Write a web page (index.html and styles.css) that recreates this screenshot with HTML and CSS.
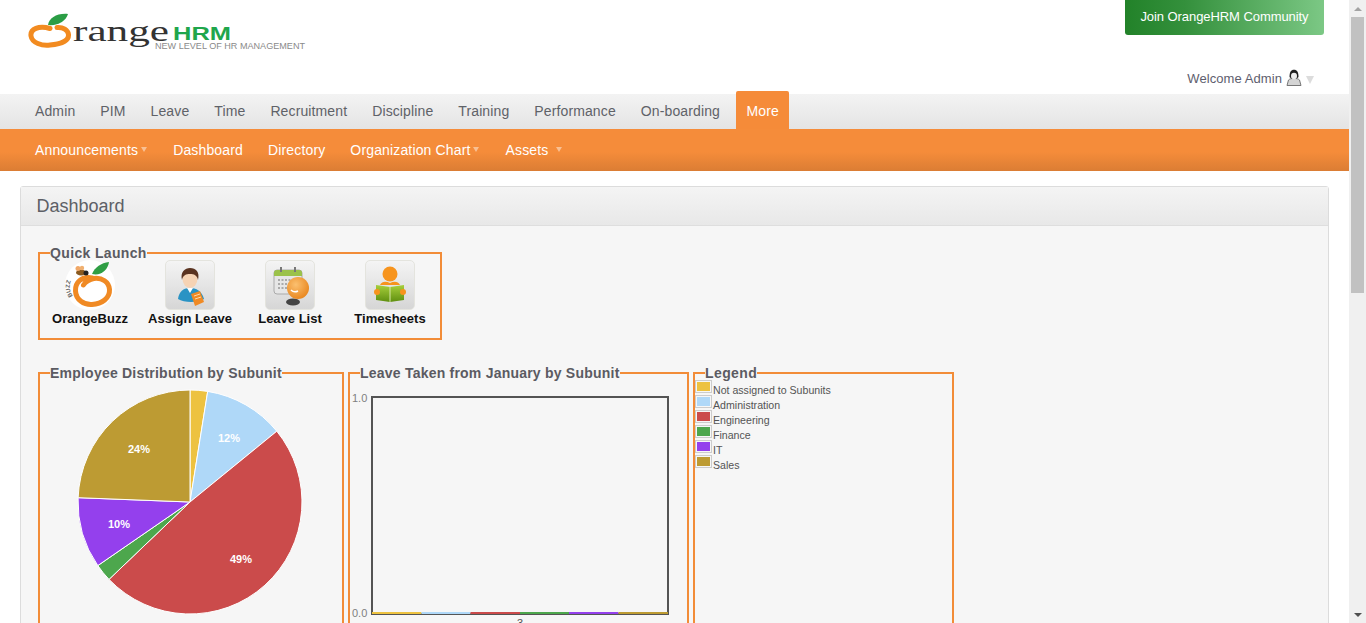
FILE: index.html
```html
<!DOCTYPE html>
<html>
<head>
    <title>OrangeHRM Dashboard</title>
    <link rel="stylesheet" href="styles.css">
</head>
<body>
<div class="page">
    <div class="main">
        <div class="top">
            <svg class="logo" width="280" height="44" viewBox="28 12 280 44">
                <path class="logo-ring" d="M50 28.500C39 25 30 29 31 36C32 43 42 46 50 45C60 44 69 41 68.500 34.500C68 30 63 27 57 27.500"/>
                <path class="logo-leaf" d="M48 25C49 18 57 13 68 14C66 21 58 26 48 25Z"/>
                <text class="logo-word" x="73" y="41" textLength="96" lengthAdjust="spacingAndGlyphs">range</text>
                <text class="logo-hrm" x="173" y="40" textLength="58" lengthAdjust="spacingAndGlyphs">HRM</text>
                <text class="logo-tag" x="155" y="49" textLength="150" lengthAdjust="spacingAndGlyphs">NEW LEVEL OF HR MANAGEMENT</text>
            </svg>
            <div class="top-right">
                <a class="join-btn">Join OrangeHRM Community</a>
                <div class="welcome">
                    <span>Welcome Admin</span>
                    <svg class="user-icon" width="16" height="18" viewBox="0 0 16 18">
                        <path d="M1 16.500L2.500 11C4 9.500 5.500 9.500 8 9.500C10.500 9.500 12 9.500 13.500 11L15 16.500Z" fill="#d4d4d4" stroke="#777"/>
                        <path d="M3.500 8C3.500 3 5 .8 8 .8C11 .8 12.500 3 12.500 8C11 10.500 5 10.500 3.500 8Z" fill="#222"/>
                        <ellipse cx="8" cy="7" rx="3" ry="3.200" fill="#eee"/>
                    </svg>
                    <span class="welcome-arrow"></span>
                </div>
            </div>
        </div>

        <div class="menu">
            <a>Admin</a>
            <a>PIM</a>
            <a>Leave</a>
            <a>Time</a>
            <a>Recruitment</a>
            <a>Discipline</a>
            <a>Training</a>
            <a>Performance</a>
            <a>On-boarding</a>
            <a class="active">More</a>
        </div>
        <div class="submenu">
            <a>Announcements<span class="caret"></span></a>
            <a>Dashboard</a>
            <a>Directory</a>
            <a>Organization Chart<span class="caret"></span></a>
            <a>Assets<span class="caret caret-wide"></span></a>
        </div>

        <div class="panel">
            <div class="panel-head">Dashboard</div>
            <div class="panel-body">
                <fieldset class="quick-launch">
                    <legend>Quick Launch</legend>
                    <div class="launch-row">
                        <div class="launch-item">
                            <svg width="50" height="50" viewBox="0 0 50 50">
                                <circle cx="25" cy="25" r="25" fill="#fff"/>
                                <path d="M27 18C17 16 10 22 10.500 31C11 40 19 45 27 44.500C37 44 45 38 44.500 29.500C44 22 37 17.500 29 18.500C25 19 20 22 18.500 25" fill="none" stroke="#f08a24" stroke-width="5" stroke-linecap="round"/>
                                <path d="M27 14C30 7 36 3 44 2C43 10 36 16 27 14Z" fill="#2f9e44"/>
                                <path id="buzz-arc" d="M8 36C3 29 4 22 9 16" fill="none"/>
                                <text class="buzz-text"><textPath href="#buzz-arc">BUZZ</textPath></text>
                                <ellipse cx="16" cy="12.500" rx="5" ry="3" fill="#8a5a20"/>
                                <circle cx="21" cy="13" r="2.500" fill="#222"/>
                                <circle cx="13" cy="8.500" r="2.500" fill="#f0a868"/>
                                <circle cx="17" cy="8" r="2.200" fill="#f0b070"/>
                            </svg>
                            <span>OrangeBuzz</span>
                        </div>
                        <div class="launch-item">
                            <div class="tile">
                                <svg width="48" height="48" viewBox="0 0 48 48">
                                    <path d="M12 38C13 30 18 27 24 27C30 27 36 30 38 38C32 42 18 42 12 38Z" fill="#2a93c4"/>
                                    <path d="M21 27L24 32L27 27Z" fill="#fff"/>
                                    <ellipse cx="24" cy="18" rx="7.500" ry="9" fill="#f6d3b4"/>
                                    <path d="M16 19C14 11 19 7 24 7C30 7 34 11 32 19C31 14 28 13 24 13C20 13 17 14 16 19Z" fill="#5a3320"/>
                                    <path d="M25 33L34 30L38 41L29 45Z" fill="#f08a24"/>
                                    <path d="M28 35L34 33M29 38L35 36" stroke="#ffd9a8" stroke-width="1"/>
                                </svg>
                            </div>
                            <span>Assign Leave</span>
                        </div>
                        <div class="launch-item">
                            <div class="tile">
                                <svg width="48" height="48" viewBox="0 0 48 48">
                                    <rect x="8" y="9" width="28" height="24" rx="3" fill="#e6e6e6" stroke="#aaa"/>
                                    <path d="M8 15V12C8 10 9 9 11 9H33C35 9 36 10 36 12V15Z" fill="#9bc24a"/>
                                    <rect x="14" y="6" width="2" height="5" fill="#777"/>
                                    <rect x="28" y="6" width="2" height="5" fill="#777"/>
                                    <path d="M12 19H32M12 23H28M12 27H26" stroke="#aaa" stroke-width="2" stroke-dasharray="2 1.500"/>
                                    <ellipse cx="27" cy="41" rx="7" ry="3.500" fill="#444"/>
                                    <circle cx="32" cy="27" r="11" fill="url(#ball)"/>
                                    <path d="M25 29C27 31 30 31 32 30" stroke="#fff" stroke-width="1.500" fill="none"/>
                                </svg>
                            </div>
                            <span>Leave List</span>
                        </div>
                        <div class="launch-item">
                            <div class="tile">
                                <svg width="48" height="48" viewBox="0 0 48 48">
                                    <circle cx="24" cy="13" r="7.500" fill="#f7941d"/>
                                    <path d="M14 24C16 20 20 20 24 22C28 20 32 20 34 24Z" fill="#f7941d"/>
                                    <path d="M10 24L24 26L38 24V39L24 41L10 39Z" fill="url(#book)"/>
                                    <path d="M24 26V41" stroke="#d7e7a8" stroke-width="1"/>
                                    <circle cx="11" cy="31" r="3" fill="#f7941d"/>
                                    <circle cx="37" cy="31" r="3" fill="#f7941d"/>
                                </svg>
                            </div>
                            <span>Timesheets</span>
                        </div>
                    </div>
                </fieldset>

                <div class="charts">
                    <fieldset class="chart chart-pie">
                        <legend>Employee Distribution by Subunit</legend>
                        <svg class="pie" width="226" height="226" viewBox="-1 -1 226 226">
                            <g stroke="#fff" stroke-width="1">
                                <path d="M112 112L112 0A112 112 0 0 1 129.700 1.400Z" fill="#edc240"/>
                                <path d="M112 112L129.700 1.400A112 112 0 0 1 198.800 41.200Z" fill="#afd8f8"/>
                                <path d="M112 112L198.800 41.200A112 112 0 0 1 186.900 195.200A112 112 0 0 1 31 189.400Z" fill="#cb4b4b"/>
                                <path d="M112 112L31 189.400A112 112 0 0 1 19.800 175.600Z" fill="#4da74d"/>
                                <path d="M112 112L19.800 175.600A112 112 0 0 1 .1 107.700Z" fill="#9440ed"/>
                                <path d="M112 112L.1 107.700A112 112 0 0 1 112 0Z" fill="#bd9b33"/>
                            </g>
                            <text class="pie-label" x="50" y="63">24%</text>
                            <text class="pie-label" x="140" y="52">12%</text>
                            <text class="pie-label" x="30" y="138">10%</text>
                            <text class="pie-label" x="152" y="173">49%</text>
                        </svg>
                    </fieldset>

                    <fieldset class="chart chart-bar">
                        <legend>Leave Taken from January by Subunit</legend>
                        <svg class="bars" width="337" height="250" viewBox="0 0 337 250">
                            <rect x="22" y="16" width="296" height="217" fill="none" stroke="#545454" stroke-width="2"/>
                            <rect x="22" y="231" width="49.500" height="2" fill="#edc240"/>
                            <rect x="71.500" y="231" width="49" height="2" fill="#afd8f8"/>
                            <rect x="120.500" y="231" width="49.500" height="2" fill="#cb4b4b"/>
                            <rect x="170" y="231" width="49" height="2" fill="#4da74d"/>
                            <rect x="219" y="231" width="49.500" height="2" fill="#9440ed"/>
                            <rect x="268.500" y="231" width="49.500" height="2" fill="#bd9b33"/>
                            <text class="axis" x="2" y="21">1.0</text>
                            <text class="axis" x="2" y="236">0.0</text>
                            <text class="axis axis-x" x="167" y="246">3</text>
                        </svg>
                    </fieldset>

                    <fieldset class="chart chart-legend">
                        <legend>Legend</legend>
                        <div class="legend-list">
                            <div class="legend-row"><span class="swatch"><i class="c-none"></i></span><span class="legend-text">Not assigned to Subunits</span></div>
                            <div class="legend-row"><span class="swatch"><i class="c-admin"></i></span><span class="legend-text">Administration</span></div>
                            <div class="legend-row"><span class="swatch"><i class="c-eng"></i></span><span class="legend-text">Engineering</span></div>
                            <div class="legend-row"><span class="swatch"><i class="c-fin"></i></span><span class="legend-text">Finance</span></div>
                            <div class="legend-row"><span class="swatch"><i class="c-it"></i></span><span class="legend-text">IT</span></div>
                            <div class="legend-row"><span class="swatch"><i class="c-sales"></i></span><span class="legend-text">Sales</span></div>
                        </div>
                    </fieldset>
                </div>
            </div>
        </div>
    </div>

    <div class="scrollbar">
        <div class="scroll-btn"><span class="arrow-up"></span></div>
        <div class="scroll-thumb"></div>
        <div class="scroll-space"></div>
        <div class="scroll-btn"><span class="arrow-down"></span></div>
    </div>
</div>

<svg class="defs" width="0" height="0">
    <defs>
        <radialGradient id="ball" cx="0.4" cy="0.35" r="0.7">
            <stop offset="0" stop-color="#fbc070"/>
            <stop offset="1" stop-color="#e8851c"/>
        </radialGradient>
        <linearGradient id="book" x1="0" y1="0" x2="0" y2="1">
            <stop offset="0" stop-color="#a8cf3c"/>
            <stop offset="1" stop-color="#5f8f10"/>
        </linearGradient>
    </defs>
</svg>
</body>
</html>
```

FILE: styles.css
```css
html, body {
    margin: 0;
    height: 623px;
    overflow: hidden;
    background: #fff;
}
body {
    font-family: "Liberation Sans", Arial, sans-serif;
    font-size: 14px;
    color: #5d5d5d;
}
.defs {
    position: absolute;
}
.page {
    display: flex;
    height: 623px;
    overflow: hidden;
}
.main {
    flex: 1;
    min-width: 0;
}

/* header */
.top {
    display: flex;
    justify-content: space-between;
    height: 94px;
    padding-right: 25px;
}
.logo {
    margin: 12px 0 0 28px;
}
.logo-ring {
    fill: none;
    stroke: #f28b20;
    stroke-width: 5;
    stroke-linecap: round;
}
.logo-leaf {
    fill: #2a9d45;
}
.logo-word {
    font-family: "Liberation Serif", serif;
    font-size: 29px;
    fill: #333;
}
.logo-hrm {
    font-family: "Liberation Sans", sans-serif;
    font-size: 18px;
    font-weight: bold;
    fill: #1fa64c;
}
.logo-tag {
    font-family: "Liberation Sans", sans-serif;
    font-size: 9px;
    fill: #8a8a8a;
}
.top-right {
    display: flex;
    flex-direction: column;
    align-items: flex-end;
}
.join-btn {
    display: block;
    width: 199px;
    height: 35px;
    line-height: 33px;
    text-align: center;
    color: #fff;
    font-size: 13px;
    letter-spacing: -0.070px;
    border-radius: 0 0 3px 3px;
    background: linear-gradient(to right, #228229 0%, #34903c 30%, #7cc885 100%);
}
.welcome {
    display: flex;
    align-items: center;
    margin: 34px 10px 0 0;
    font-size: 13px;
    letter-spacing: 0.080px;
    color: #5e5e6e;
}
.user-icon {
    margin-left: 4px;
}
.welcome-arrow {
    margin: 3px 0 0 4px;
    border-left: 4px solid transparent;
    border-right: 4px solid transparent;
    border-top: 8px solid #dcdcdc;
}

/* menus */
.menu {
    display: flex;
    align-items: flex-end;
    height: 35px;
    padding-left: 22.500px;
    letter-spacing: 0.120px;
    background: linear-gradient(#f3f3f3, #e4e4e4);
}
.menu a {
    display: block;
    padding: 0 12.500px;
    line-height: 35px;
    color: #5f6268;
}
.menu a.active {
    height: 38px;
    margin-left: 4px;
    padding: 0 10px;
    line-height: 41px;
    background: #f58b39;
    color: #fff;
    border-radius: 2px 2px 0 0;
}
.submenu {
    display: flex;
    height: 42px;
    padding-left: 22.500px;
    letter-spacing: 0.150px;
    background: linear-gradient(#f58c3a 0%, #f58c3a 55%, #db7d34 100%);
}
.submenu a {
    display: flex;
    align-items: center;
    padding: 0 12.500px;
    color: #fff;
}
.caret {
    width: 0;
    margin: -1px 1.500px 0 2.500px;
    border-left: 3.500px solid transparent;
    border-right: 3.500px solid transparent;
    border-top: 5px solid rgba(255, 255, 255, 0.45);
}
.caret-wide {
    margin-left: 8px;
    margin-right: 0;
}

/* dashboard panel */
.panel {
    margin: 15px 20px 0;
    height: 600px;
    border: 1px solid #dcdcdc;
    border-radius: 3px;
    background: #f6f6f6;
}
.panel-head {
    height: 38px;
    line-height: 38px;
    padding-left: 15.500px;
    font-size: 18px;
    color: #5d6066;
    border-bottom: 1px solid #dedede;
    background: linear-gradient(#f4f4f4, #e8e8e8);
}
.panel-body {
    padding: 19px 0 0 17px;
}
fieldset {
    margin: 0;
    padding: 0;
    border: 2px solid #f28c38;
    min-width: 0;
}
legend {
    margin-left: 10px;
    padding: 0;
    font-size: 14px;
    font-weight: bold;
    letter-spacing: 0.220px;
    color: #5b5b62;
}
.quick-launch legend {
    letter-spacing: 0.350px;
}
.chart-legend legend {
    letter-spacing: 0.400px;
}

.quick-launch {
    width: 400px;
    padding-bottom: 12px;
}
.launch-row {
    display: flex;
    margin-top: -1px;
}
.launch-item {
    width: 100px;
    display: flex;
    flex-direction: column;
    align-items: center;
}
.launch-item span {
    margin-top: 1px;
    font-size: 13px;
    line-height: 15px;
    font-weight: bold;
    color: #111;
}
.launch-item svg {
    display: block;
}
.tile {
    width: 48px;
    height: 48px;
    border: 1px solid #e4e4de;
    border-radius: 5px;
    background: linear-gradient(#f4f4f4, #d6d6d6);
}
.buzz-text {
    font-size: 6px;
    font-weight: bold;
    fill: #666;
}

.charts {
    display: flex;
    gap: 4px;
    margin-top: 25px;
}
.chart {
    height: 300px;
}
.chart-pie {
    width: 302px;
}
.chart-bar {
    width: 337px;
}
.chart-legend {
    width: 257px;
}
.pie {
    display: block;
    overflow: visible;
    margin: 8px 0 0 37px;
}
.pie-label {
    font-size: 11px;
    font-weight: bold;
    fill: #fff;
}
.bars {
    display: block;
    overflow: visible;
}
.axis {
    font-size: 11px;
    fill: #7f7f7f;
}
.axis-x {
    fill: #545454;
}

.legend-list {
    margin-top: -1px;
}
.legend-row {
    display: flex;
    align-items: flex-start;
    gap: 1px;
    height: 15px;
    font-size: 10.600px;
    color: #545454;
}
.legend-text {
    line-height: 15px;
    margin-top: 3px;
}
.swatch {
    display: block;
    padding: 1px;
    border: 1px solid #ccc;
}
.swatch i {
    display: block;
    width: 13px;
    height: 9px;
}
.c-none { background: #edc240; }
.c-admin { background: #afd8f8; }
.c-eng { background: #cb4b4b; }
.c-fin { background: #4da74d; }
.c-it { background: #9440ed; }
.c-sales { background: #bd9b33; }

/* scrollbar */
.scrollbar {
    width: 17px;
    height: 623px;
    display: flex;
    flex-direction: column;
    background: #f0f0f0;
}
.scroll-btn {
    height: 17px;
    display: flex;
    align-items: center;
    justify-content: center;
}
.arrow-up {
    border-left: 4px solid transparent;
    border-right: 4px solid transparent;
    border-bottom: 4px solid #a3a3a3;
}
.arrow-down {
    border-left: 4px solid transparent;
    border-right: 4px solid transparent;
    border-top: 4px solid #505050;
}
.scroll-thumb {
    height: 276px;
    margin: 0 2px;
    background: #c1c1c1;
}
.scroll-space {
    flex: 1;
}
```
